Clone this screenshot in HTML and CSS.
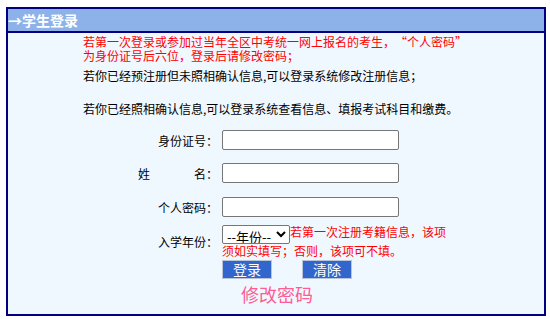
FILE: index.html
```html
<!DOCTYPE html>
<html lang="zh-CN">
<head>
<meta charset="utf-8">
<title>学生登录</title>
<link rel="stylesheet" href="styles.css">
</head>
<body>
<div class="box">
  <div class="head">→学生登录</div>
  <div class="content">
    <div class="notice">若第一次登录或参加过当年全区中考统一网上报名的考生，<span class="ql">“</span>个人密码<span class="qr">”</span><br>为身份证号后六位，登录后请修改密码；</div>
    <p class="info info1">若你已经预注册但未照相确认信息,可以登录系统修改注册信息；</p>
    <p class="info info2">若你已经照相确认信息,可以登录系统查看信息、填报考试科目和缴费。</p>
    <form class="form">
      <div class="row r1">
        <label class="lbl">身份证号：</label>
        <div class="fld"><input class="txt" type="text"></div>
      </div>
      <div class="row r2">
        <label class="lbl">姓<span class="sp"></span>名：</label>
        <div class="fld"><input class="txt" type="text"></div>
      </div>
      <div class="row r3">
        <label class="lbl">个人密码：</label>
        <div class="fld"><input class="txt" type="password"></div>
      </div>
      <div class="row r4">
        <label class="lbl">入学年份：</label>
        <div class="fld year"><select class="sel"><option>--年份--</option></select><span class="hint">若第一次注册考籍信息，该项须如实填写；否则，该项可不填。</span></div>
      </div>
      <div class="row r5">
        <div class="lbl"></div>
        <div class="fld"><button class="btn" type="button">登录</button><button class="btn btn2" type="reset">清除</button></div>
      </div>
      <div class="row r6">
        <div class="lbl"></div>
        <div class="fld"><span class="chg">修改密码</span></div>
      </div>
    </form>
  </div>
</div>
</body>
</html>
```
FILE: styles.css
```css
body {
  margin: 0;
  background: #ffffff;
  font-family: "Noto Sans CJK SC", sans-serif;
  font-size: 12px;
  color: #000000;
}
.box {
  margin: 7px 0 0 6px;
  width: 540px;
  height: 309px;
  box-sizing: border-box;
  border: 2px solid #000080;
  background: #f0f8ff;
}
.head {
  height: 22px;
  background: #8db1e9;
  border-bottom: 2px solid #000080;
  color: #ffffff;
  font-weight: bold;
  font-size: 14px;
  line-height: 22px;
}
.content {
  padding: 2px 0 0 75px;
}
.notice {
  color: #ff0000;
  line-height: 14px;
}
.ql,
.qr {
  display: inline-block;
  width: 12px;
}
.ql { text-align: right; }
.qr { text-align: left; }
.info {
  margin: 0;
  line-height: 14px;
}
.info1 { margin-top: 6px; }
.info2 { margin-top: 19px; }
.form {
  margin: 0 0 0 -75px;
}
.row {
  display: flex;
  align-items: center;
}
.r1 { margin-top: 14px; }
.r2 { margin-top: 13px; }
.r3 { margin-top: 14px; }
.r4 { margin-top: 8px; }
.r5 { margin-top: 2px; }
.r6 { margin-top: 4px; }
.lbl {
  width: 210px;
  margin-right: 4px;
  text-align: right;
  flex: none;
}
.sp {
  display: inline-block;
  width: 44px;
}
.txt {
  width: 177px;
  height: 20px;
  box-sizing: border-box;
  border: 1px solid #767676;
  border-radius: 2px;
  background: #ffffff;
  margin: 0;
  padding: 0 2px;
}
.year {
  width: 232px;
  line-height: 13px;
  color: #ff0000;
}
.sel {
  width: 68px;
  height: 19px;
  margin: 0;
  vertical-align: top;
  font-family: "Noto Sans CJK SC", sans-serif;
  font-size: 13px;
  color: #000000;
  border: 1px solid #767676;
  border-radius: 2px;
  background: #ffffff;
  padding: 0;
}
.hint {
  vertical-align: top;
  line-height: 14px;
}
.btn {
  width: 50px;
  height: 19px;
  margin: 0;
  padding: 0;
  background: #3366cc;
  color: #ffffff;
  border: 1px solid #b8c4d8;
  font-family: "Noto Sans CJK SC", sans-serif;
  font-size: 14px;
  line-height: 17px;
}
.btn2 {
  margin-left: 30px;
}
.chg {
  display: inline-block;
  margin-left: 19px;
  font-size: 18px;
  line-height: 22px;
  color: #ff5c93;
}
```
